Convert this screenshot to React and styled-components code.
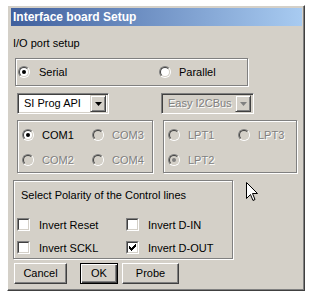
import React from "react";
import styled, { createGlobalStyle } from "styled-components";

const Global = createGlobalStyle`
  html, body { margin: 0; padding: 0; background: #ffffff; }
  body { font-family: "Liberation Sans", Arial, sans-serif; font-size: 11px; }
  #root { position: relative; }
`;

const Page = styled.div`
  position: relative;
  padding: 5px 0 0 7px;
  width: 316px;
  height: 296px;
  box-sizing: border-box;
`;

const Window = styled.div`
  box-sizing: border-box;
  width: 298px;
  height: 286px;
  background: #d4d0c8;
  border-style: solid;
  border-width: 1px;
  border-color: #ffffff #404040 #404040 #ffffff;
  box-shadow: inset -1px -1px 0 #808080;
  padding: 2px 2px 0 3px;
  display: flex;
  flex-direction: column;
  align-items: flex-start;
`;

const TitleBar = styled.div`
  align-self: stretch;
  height: 18px;
  background: linear-gradient(to right, #3f5f9d, #a8cbf1);
  color: #ffffff;
  font-weight: bold;
  font-size: 12px;
  line-height: 18px;
  padding-left: 2px;
  white-space: nowrap;
`;

const SectionLabel = styled.div`
  margin-top: 11px;
  padding-left: 2px;
  line-height: 13px;
  height: 13px;
  color: #000;
`;

const Group = styled.div`
  box-sizing: border-box;
  flex: none;
  width: ${(p) => p.$w}px;
  max-width: ${(p) => p.$w}px;
  height: ${(p) => p.$h}px;
  margin-top: ${(p) => p.$mt || 0}px;
  margin-left: ${(p) => p.$ml || 0}px;
  border: 1px solid #808080;
  box-shadow: 1px 1px 0 #ffffff, inset 1px 1px 0 #ffffff;
`;

const PortGroup = styled(Group)`
  display: flex;
  align-items: center;
  padding-left: 2px;
`;

const PortCell = styled.div`
  width: ${(p) => p.$w}px;
  display: flex;
`;

const ComboRow = styled.div`
  display: flex;
  margin-top: 7px;
  margin-left: 6px;
  gap: 52px;
`;

const ComboBox = styled.div`
  box-sizing: border-box;
  width: ${(p) => p.$w}px;
  height: 21px;
  border-style: solid;
  border-width: 1px;
  border-color: #808080 #ffffff #ffffff #808080;
  box-shadow: inset 1px 1px 0 #404040, inset -1px -1px 0 #d4d0c8;
  background: ${(p) => (p.$disabled ? "#d4d0c8" : "#ffffff")};
  display: flex;
  align-items: center;
  padding: 2px;
`;

const ComboText = styled.span`
  flex: 1;
  padding-left: 4px;
  line-height: 15px;
  color: ${(p) => (p.$disabled ? "#808080" : "#000")};
  text-shadow: ${(p) => (p.$disabled ? "1px 1px 0 #ffffff" : "none")};
  white-space: nowrap;
`;

const DropButton = styled.div`
  box-sizing: border-box;
  width: 16px;
  height: 17px;
  background: #d4d0c8;
  border-style: solid;
  border-width: 1px;
  border-color: #d4d0c8 #404040 #404040 #d4d0c8;
  box-shadow: inset 1px 1px 0 #ffffff, inset -1px -1px 0 #808080;
  display: flex;
  align-items: center;
  justify-content: center;
`;

const GroupsRow = styled.div`
  display: flex;
  margin-top: 6px;
  margin-left: 6px;
  gap: 10px;
`;

const RadioGrid = styled(Group)`
  display: grid;
  grid-template-columns: 70px auto;
  grid-auto-rows: 13px;
  row-gap: 12px;
  padding: 7px 0 0 4px;
  align-content: start;
`;

const Item = styled.label`
  display: flex;
  align-items: center;
  height: 13px;
  white-space: nowrap;
  color: ${(p) => (p.$disabled ? "#808080" : "#000")};
  text-shadow: ${(p) => (p.$disabled ? "1px 1px 0 #ffffff" : "none")};
`;

const RadioOuter = styled.span`
  box-sizing: border-box;
  flex: none;
  width: 12px;
  height: 12px;
  border-radius: 50%;
  border: 1px solid;
  border-color: #808080 #ffffff #ffffff #808080;
  margin-right: ${(p) => p.$gap}px;
  display: flex;
`;

const RadioInner = styled.span`
  box-sizing: border-box;
  width: 10px;
  height: 10px;
  border-radius: 50%;
  border: 1px solid;
  border-color: #404040 #d4d0c8 #d4d0c8 #404040;
  background: ${(p) => (p.$disabled ? "#d4d0c8" : "#ffffff")};
  display: flex;
  align-items: center;
  justify-content: center;
`;

const RadioDot = styled.span`
  width: 4px;
  height: 4px;
  border-radius: 50%;
  background: ${(p) => (p.$disabled ? "#808080" : "#000")};
`;

const PolarityGroup = styled(Group)`
  padding: 8px 0 0 3px;
  display: flex;
  flex-direction: column;
  overflow: visible;
`;

const PolarityTitle = styled.div`
  line-height: 13px;
  padding-left: 4px;
  white-space: nowrap;
`;

const CheckGrid = styled.div`
  display: grid;
  grid-template-columns: 109px auto;
  grid-auto-rows: 13px;
  row-gap: 10px;
  margin-top: 16px;
`;

const CheckOuter = styled.span`
  box-sizing: border-box;
  flex: none;
  width: 13px;
  height: 13px;
  border: 1px solid;
  border-color: #808080 #ffffff #ffffff #808080;
  margin-right: 9px;
  display: flex;
`;

const CheckInner = styled.span`
  box-sizing: border-box;
  width: 11px;
  height: 11px;
  border: 1px solid;
  border-color: #404040 #d4d0c8 #d4d0c8 #404040;
  background: #ffffff;
  display: flex;
  align-items: center;
  justify-content: center;
`;

const ButtonRow = styled.div`
  display: flex;
  align-items: center;
  margin-top: 4px;
  margin-left: 3px;
  gap: 4px;
`;

const Button = styled.div`
  box-sizing: border-box;
  width: ${(p) => p.$w}px;
  height: 21px;
  margin-right: ${(p) => p.$mr || 0}px;
  background: #d4d0c8;
  border-style: solid;
  border-width: 1px;
  border-color: ${(p) =>
    p.$default ? "#000000" : "#ffffff #404040 #404040 #ffffff"};
  box-shadow: ${(p) =>
    p.$default
      ? "inset 1px 1px 0 #ffffff, inset -1px -1px 0 #404040, inset -2px -2px 0 #808080"
      : "inset -1px -1px 0 #808080"};
  display: flex;
  align-items: center;
  justify-content: center;
  line-height: 13px;
  color: #000;
`;

const Cursor = styled.svg`
  position: absolute;
  left: 246px;
  top: 182px;
`;

function Radio({ checked, disabled, gap = 8, children }) {
  return (
    <Item $disabled={disabled}>
      <RadioOuter $gap={gap}>
        <RadioInner $disabled={disabled}>
          {checked && <RadioDot $disabled={disabled} />}
        </RadioInner>
      </RadioOuter>
      {children}
    </Item>
  );
}

function Check({ checked, children }) {
  return (
    <Item>
      <CheckOuter>
        <CheckInner>
          {checked && (
            <svg width="7" height="7" viewBox="0 0 7 7">
              <path d="M0 2h1v1h1v1h1v-1h1v-1h1v-1h1v-1h1v3h-1v1h-1v1h-1v1h-1v1h-1v-1h-1v-1h-1v-1h-1z" fill="#000" />
            </svg>
          )}
        </CheckInner>
      </CheckOuter>
      {children}
    </Item>
  );
}

function Combo({ w, disabled, children }) {
  return (
    <ComboBox $w={w} $disabled={disabled}>
      <ComboText $disabled={disabled}>{children}</ComboText>
      <DropButton>
        <svg width="7" height="4" viewBox="0 0 7 4">
          <path d="M0 0h7L3.5 4z" fill={disabled ? "#808080" : "#000"} />
        </svg>
      </DropButton>
    </ComboBox>
  );
}

export default function App() {
  return (
    <Page>
      <Global />
      <Window>
        <TitleBar>Interface board Setup</TitleBar>
        <SectionLabel>I/O port setup</SectionLabel>
        <PortGroup $w={233} $h={28} $mt={8} $ml={4}>
          <PortCell $w={141}>
            <Radio checked gap={9}>Serial</Radio>
          </PortCell>
          <PortCell $w={80}>
            <Radio gap={8}>Parallel</Radio>
          </PortCell>
        </PortGroup>
        <ComboRow>
          <Combo w={92}>SI Prog API</Combo>
          <Combo w={93} disabled>Easy I2CBus</Combo>
        </ComboRow>
        <GroupsRow>
          <RadioGrid $w={136} $h={53}>
            <Radio checked>COM1</Radio>
            <Radio disabled>COM3</Radio>
            <Radio disabled>COM2</Radio>
            <Radio disabled>COM4</Radio>
          </RadioGrid>
          <RadioGrid $w={134} $h={53}>
            <Radio disabled>LPT1</Radio>
            <Radio disabled>LPT3</Radio>
            <Radio disabled checked>LPT2</Radio>
          </RadioGrid>
        </GroupsRow>
        <PolarityGroup $w={220} $h={79} $mt={7} $ml={2}>
          <PolarityTitle>Select Polarity of the Control lines</PolarityTitle>
          <CheckGrid>
            <Check>Invert Reset</Check>
            <Check>Invert D-IN</Check>
            <Check>Invert SCKL</Check>
            <Check checked>Invert D-OUT</Check>
          </CheckGrid>
        </PolarityGroup>
        <ButtonRow>
          <Button $w={53} $mr={9}>Cancel</Button>
          <Button $w={38} $default>OK</Button>
          <Button $w={57}>Probe</Button>
        </ButtonRow>
      </Window>
      <Cursor width="12" height="20" viewBox="0 0 12 20">
        <path
          d="M0.5 0.5 V16.5 L4.5 12.5 L7 18.5 L9 17.5 L6.5 11.5 H11.5 Z"
          fill="#ffffff"
          stroke="#000000"
          strokeWidth="1"
        />
      </Cursor>
    </Page>
  );
}
